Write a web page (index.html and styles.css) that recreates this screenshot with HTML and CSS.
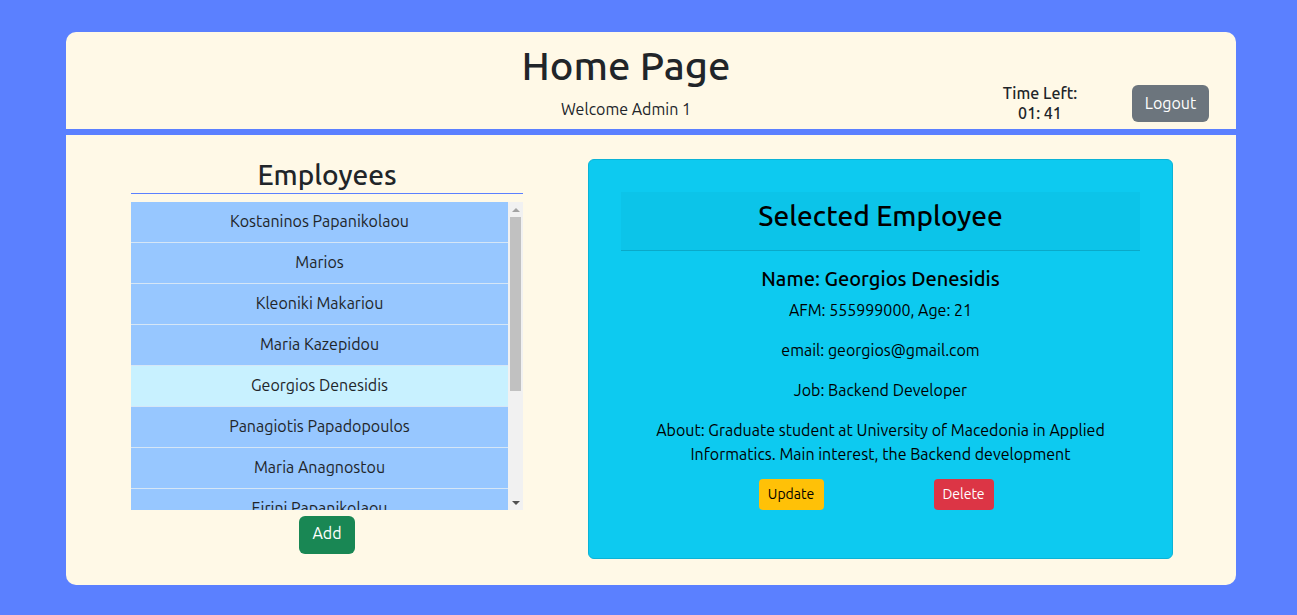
FILE: index.html
```html
<!DOCTYPE html>
<html lang="en">
<head>
<meta charset="utf-8">
<title>Home Page</title>
<link rel="stylesheet" href="styles.css">
</head>
<body>
<div class="card">
  <header class="top">
    <div class="title-block">
      <h1 class="title">Home Page</h1>
      <p class="welcome">Welcome Admin 1</p>
    </div>
    <div class="timer">
      <div>Time Left:</div>
      <div>01: 41</div>
    </div>
    <button class="btn btn-logout">Logout</button>
  </header>
  <div class="bar"></div>
  <main class="content">
    <section class="left">
      <h2 class="list-title">Employees</h2>
      <div class="list-wrap">
        <ul class="emp-list">
          <li class="emp">Kostaninos Papanikolaou</li>
          <li class="emp">Marios</li>
          <li class="emp">Kleoniki Makariou</li>
          <li class="emp">Maria Kazepidou</li>
          <li class="emp selected">Georgios Denesidis</li>
          <li class="emp">Panagiotis Papadopoulos</li>
          <li class="emp">Maria Anagnostou</li>
          <li class="emp">Eirini Papanikolaou</li>
        </ul>
        <div class="scrollbar">
          <div class="sb-btn"><span class="arrow-up"></span></div>
          <div class="sb-track"><div class="sb-thumb"></div></div>
          <div class="sb-btn"><span class="arrow-down"></span></div>
        </div>
      </div>
      <button class="btn btn-add">Add</button>
    </section>
    <section class="panel">
      <div class="panel-head">Selected Employee</div>
      <h5 class="emp-name">Name: Georgios Denesidis</h5>
      <p class="info">AFM: 555999000, Age: 21</p>
      <p class="info">email: georgios@gmail.com</p>
      <p class="info">Job: Backend Developer</p>
      <p class="info about">About: Graduate student at University of Macedonia in Applied Informatics. Main interest, the Backend development</p>
      <div class="actions">
        <button class="btn-sm btn-update">Update</button>
        <button class="btn-sm btn-delete">Delete</button>
      </div>
    </section>
  </main>
</div>
</body>
</html>
```
FILE: styles.css
```css
* { box-sizing: border-box; }
html, body { margin: 0; padding: 0; }
body {
  background: #5b80ff;
  font-family: Ubuntu, Lato, "Open Sans", sans-serif;
  color: #212529;
  height: 615px;
  overflow: hidden;
  padding-top: 32px;
}
.card {
  width: 1170px;
  height: 553px;
  margin-left: 66px;
  background: #fff9e7;
  border-radius: 10px;
  overflow: hidden;
}
.top {
  height: 97px;
  display: flex;
  align-items: flex-start;
}
.title-block {
  flex: 0 0 756px;
  margin-left: 182px;
  text-align: center;
  padding-top: 10px;
}
.title {
  margin: 0 0 7px;
  font-size: 40px;
  font-weight: 500;
  line-height: 48px;
}
.welcome {
  margin: 0;
  font-size: 16px;
  line-height: 24px;
}
.timer {
  width: 76px;
  margin-top: 51px;
  margin-left: -2px;
  text-align: center;
  font-size: 16px;
  font-weight: 500;
  line-height: 20px;
  white-space: nowrap;
}
.btn {
  font-family: inherit;
  font-size: 16px;
  line-height: 24px;
  padding: 6px 12px;
  border: 1px solid transparent;
  border-radius: 6px;
  color: #fff;
  cursor: pointer;
}
.btn-logout {
  margin-left: 54px;
  margin-top: 53px;
  width: 77px;
  height: 37px;
  padding: 4px 0 6px;
  background: #6c757d;
}
.bar {
  height: 6px;
  background: #5b80ff;
}
.content {
  display: flex;
  align-items: flex-start;
  padding: 0 63px 0 65px;
  gap: 65px;
}
.left {
  width: 392px;
  padding-top: 23px;
  display: flex;
  flex-direction: column;
  align-items: center;
}
.list-title {
  width: 100%;
  margin: 0;
  font-size: 28px;
  font-weight: 500;
  line-height: 34px;
  text-align: center;
  border-bottom: 1px solid #5b80ff;
  padding-bottom: 1px;
}
.list-wrap {
  width: 100%;
  height: 308px;
  margin-top: 8px;
  display: flex;
}
.emp-list {
  flex: 1;
  margin: 0;
  padding: 0;
  list-style: none;
  overflow: hidden;
}
.emp {
  height: 41px;
  line-height: 39px;
  text-align: center;
  font-size: 16px;
  background: #97c7ff;
  border-bottom: 1px solid #d5e6f6;
}
.emp.selected { background: #c8f1ff; }
.scrollbar {
  width: 15px;
  background: #f1f1f1;
  display: flex;
  flex-direction: column;
}
.sb-btn {
  height: 15px;
  display: flex;
  align-items: center;
  justify-content: center;
}
.arrow-up, .arrow-down {
  width: 0;
  height: 0;
  border-left: 4px solid transparent;
  border-right: 4px solid transparent;
}
.arrow-up { border-bottom: 4px solid #a3a3a3; }
.arrow-down { border-top: 4px solid #505050; }
.sb-track { flex: 1; padding: 0 2px; }
.sb-thumb {
  height: 174px;
  background: #c1c1c1;
}
.btn-add {
  margin-top: 6px;
  width: 56px;
  height: 38px;
  padding: 4px 0 8px;
  background: #198754;
}
.panel {
  width: 585px;
  height: 400px;
  margin-top: 24px;
  background: #0dcaf0;
  border: 1px solid #0bb3d6;
  border-radius: 6px;
  padding: 32px;
  color: #000;
  text-align: center;
}
.panel-head {
  height: 59px;
  background: #0cc4e9;
  border-bottom: 1px solid #0aa9c9;
  font-size: 28px;
  line-height: 48px;
  font-weight: 500;
}
.emp-name {
  margin: 16px 0 7px;
  font-size: 20px;
  font-weight: 500;
  line-height: 24px;
}
.info {
  margin: 0 0 16px;
  font-size: 16px;
  line-height: 24px;
}
.info.about { margin-bottom: 13px; }
.actions {
  display: flex;
  justify-content: center;
  gap: 110px;
  padding-right: 9px;
}
.btn-sm {
  font-family: inherit;
  font-size: 14px;
  line-height: 21px;
  padding: 4px 0;
  height: 31px;
  border: 1px solid transparent;
  border-radius: 4px;
}
.btn-update { width: 65px; background: #ffc107; color: #000; }
.btn-delete { width: 60px; background: #dc3545; color: #fff; }
```
